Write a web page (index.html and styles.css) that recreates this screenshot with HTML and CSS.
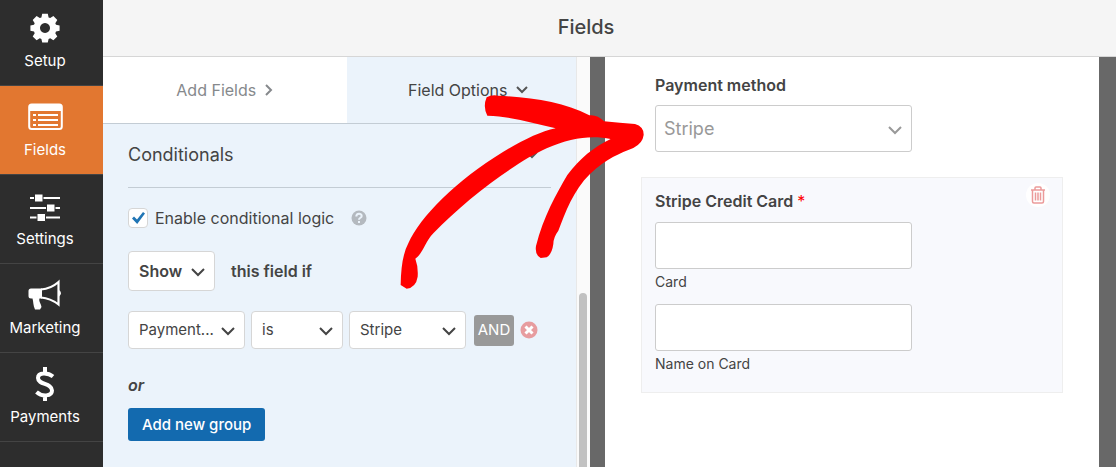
FILE: index.html
```html
<!DOCTYPE html>
<html lang="en">
	<head>
		<meta charset="utf-8">
		<title>Fields</title>
		<link rel="stylesheet" href="styles.css">
	</head>
	<body>

	<nav class="sidebar">
		<a href="#" class="item">
			<svg width="30" height="30" viewBox="0 0 30 30">
				<path fill="#fff" fill-rule="evenodd" d="M12.2 0.8h5.6l0.8 3.6 1.6 0.7 3.2-2 3.9 3.9-2 3.2 0.7 1.6 3.6 0.6v5.4l-3.6 0.8-0.7 1.6 2 3.2-3.9 3.9-3.2-2-1.6 0.7-0.8 3.6h-5.6l-0.8-3.6-1.6-0.7-3.2 2-3.9-3.9 2-3.2-0.7-1.6-3.6-0.8v-5.4l3.6-0.6 0.7-1.6-2-3.2 3.9-3.9 3.2 2 1.6-0.7zM15 10a5 5 0 1 0 0.01 0z"/>
			</svg>
			<span>Setup</span>
		</a>
		<a href="#" class="item active">
			<svg width="35" height="30" viewBox="0 0 35 30">
				<rect x="1.2" y="2.5" width="32.6" height="24.5" rx="2.5" fill="none" stroke="#fff" stroke-width="2"/>
				<path fill="#fff" d="M1 3h33v6H1z"/>
				<path stroke="#fff" stroke-width="2" d="M5 13h3M10 13h20M5 18h3M10 18h20M5 23h3M10 23h20"/>
			</svg>
			<span>Fields</span>
		</a>
		<a href="#" class="item">
			<svg width="30" height="36" viewBox="0 0 30 36">
				<path stroke="#fff" stroke-width="2" d="M0 10h30M0 20h30M0 29.500h30"/>
				<path fill="#fff" stroke="#2d2d2d" d="M4.500 6h8.500v8h-8.500zM16.500 16h8.500v8h-8.500zM7 25.500h8.500v8H7z"/>
			</svg>
			<span>Settings</span>
		</a>
		<a href="#" class="item">
			<svg width="36" height="30" viewBox="0 0 36 30">
				<path fill="#fff" d="M4 8.500h11v10h-2.500c-1 3 1.500 5 2 8.500l-1.500 2.500H8C6 25 6.500 22 5.500 18.500H4q-2.500 0-2.500-2.500v-5q0-2.500 2.500-2.500z"/>
				<path fill="none" stroke="#fff" stroke-width="2.200" d="M14 9.500C21 9 27 6 31.500 2v22.500C27 21 21 18 14 17.500"/>
				<path fill="#fff" d="M32 10q4 3.200 0 6.500z"/>
			</svg>
			<span>Marketing</span>
		</a>
		<a href="#" class="item">
			<svg width="24" height="36" viewBox="0 0 24 36">
				<path fill="none" stroke="#fff" stroke-width="4" d="M12 1v6M12 29v6M20 10.500C15 6.500 5 6 5 12c0 7 14 5 14 12.500 0 6-10 6.500-15.500 1.500"/>
			</svg>
			<span>Payments</span>
		</a>
	</nav>

	<div class="main">
		<header class="header"><h1>Fields</h1></header>
		<div class="content">
			<section class="panel">
				<div class="tabs">
					<a href="#" class="tab">Add Fields
						<svg width="8" height="12" viewBox="0 0 8 12"><path d="M1 1l5 5-5 5"/></svg>
					</a>
					<a href="#" class="tab active">Field Options
						<svg width="12" height="8" viewBox="0 0 12 8"><path d="M1 1l5 5 5-5"/></svg>
					</a>
				</div>

				<div class="options">
					<h2>Conditionals
						<svg width="12" height="8" viewBox="0 0 12 8"><path d="M1 1l5 5 5-5"/></svg>
					</h2>
					<div class="enable">
						<label for="conditional">
							<span class="tick">
								<input type="checkbox" id="conditional" checked>
								<svg width="13" height="12" viewBox="0 0 13 12"><path d="M0 6.500L2 4.500 5 7.500 11 0l2 1.500L5.200 12z"/></svg>
							</span>
							Enable conditional logic
						</label>
						<svg class="help" width="16" height="16" viewBox="0 0 16 16">
							<circle cx="8" cy="8" r="7.500" fill="#b4b9bf"/>
							<path fill="none" stroke="#ebf3fb" stroke-width="2" d="M5.300 6.500C5.300 3 10.700 3 10.700 6 10.700 8 8 7.500 8 9.800M8 11v2"/>
						</svg>
					</div>
					<div class="row show">
						<span class="select">
							<select aria-label="Action"><option>Show</option></select>
							<svg width="14" height="9" viewBox="0 0 14 9"><path d="M1 1l6 6 6-6"/></svg>
						</span>
						<span>this field if</span>
					</div>
					<div class="row rule">
						<span class="select wide">
							<select aria-label="Field"><option>Payment...</option></select>
							<svg width="14" height="9" viewBox="0 0 14 9"><path d="M1 1l6 6 6-6"/></svg>
						</span>
						<span class="select">
							<select aria-label="Operator"><option>is</option></select>
							<svg width="14" height="9" viewBox="0 0 14 9"><path d="M1 1l6 6 6-6"/></svg>
						</span>
						<span class="select wide">
							<select aria-label="Value"><option>Stripe</option></select>
							<svg width="14" height="9" viewBox="0 0 14 9"><path d="M1 1l6 6 6-6"/></svg>
						</span>
						<button class="and">AND</button>
						<button class="remove" aria-label="Remove rule">
							<svg width="18" height="18" viewBox="0 0 18 18">
								<circle cx="9" cy="9" r="8.500" fill="#e79c9f"/>
								<path stroke="#fff" stroke-width="3" d="M5.500 5.500l7 7M12.500 5.500l-7 7"/>
							</svg>
						</button>
					</div>
					<p class="or">or</p>
					<button class="add">Add new group</button>
				</div>

				<div class="scrollbar"><div class="thumb"></div></div>
				<svg class="arrow" width="270" height="250" viewBox="0 0 810 750">
					<path fill="#f00" d="M290 172Q305 163 325 167C430 173 520 185 598 226Q622 223 642 244Q690 249 735 252Q762 260 761 285Q758 310 730 324C690 340 650 355 600 402C550 450 525 520 505 572Q490 592 490 612Q486 642 470 652L452 654Q434 645 438 618C460 530 500 460 532 405C570 355 610 322 662 297C600 285 540 295 470 325C380 365 230 475 130 580C105 605 100 640 76 656Q85 680 83 710Q78 742 50 746L32 735Q33 650 55 610C90 530 200 420 340 335C400 300 450 275 497 265C430 250 370 230 292 227Q278 200 290 172Z"/>
				</svg>
			</section>

			<main class="preview">
				<form class="form">
					<div class="field">
						<label class="title" for="method">Payment method</label>
						<span class="select">
							<select id="method"><option>Stripe</option></select>
							<svg width="14" height="9" viewBox="0 0 14 9"><path d="M1 1l6 6 6-6"/></svg>
						</span>
					</div>
					<div class="field card">
						<button type="button" class="trash" aria-label="Delete field">
							<svg width="16" height="18" viewBox="0 0 16 18">
								<path fill="none" stroke="#eb9a9a" stroke-width="1.500" d="M1 4h14M5 4V2q0-1 1-1h4q1 0 1 1v2M2.500 4v11.500q0 1.500 1.500 1.500h8q1.500 0 1.500-1.500V4M5.500 6.500v8M8 6.500v8M10.500 6.500v8"/>
							</svg>
						</button>
						<div class="title">Stripe Credit Card<span class="required">*</span></div>
						<input type="text" id="card">
						<label for="card">Card</label>
						<input type="text" id="name">
						<label for="name">Name on Card</label>
					</div>
				</form>
			</main>
		</div>
	</div>

	</body>
</html>
```

FILE: styles.css
```css
*{
	box-sizing: border-box;
}
body{
	margin: 0;
	display: flex;
	min-height: 100vh;
	font-family: Inter, "Liberation Sans", sans-serif;
	font-size: 16px;
	line-height: 20px;
	color: #444;
}
a{
	text-decoration: none;
}
button, select, input{
	font: inherit;
	color: inherit;
	margin: 0;
}
button{
	border: 0;
	cursor: pointer;
}

.sidebar{
	width: 103px;
	flex: none;
	margin-top: -3px;
	background: #2d2d2d;
}
.sidebar .item{
	display: flex;
	flex-direction: column;
	align-items: center;
	height: 89px;
	padding-right: 13px;
	border-bottom: 1px solid #444;
	font-size: 15px;
	color: #fff;
}
.sidebar .item svg{
	height: 36px;
	margin: 13px 0 5px;
}
.sidebar .active{
	background: #e27730;
}

.main{
	flex: 1;
	display: flex;
	flex-direction: column;
	min-width: 0;
}
.header{
	height: 57px;
	padding-right: 47px;
	background: #f5f5f5;
	border-bottom: 1px solid #d6d6d6;
}
.header h1{
	margin: 0;
	font-size: 20px;
	font-weight: 500;
	line-height: 54px;
	text-align: center;
}
.content{
	flex: 1;
	display: flex;
}

.panel{
	position: relative;
	width: 487px;
	flex: none;
	background: #ebf3fb;
}
.tabs{
	display: flex;
	height: 67px;
	border-bottom: 1px solid #c3ccd4;
}
.tab{
	flex: 1;
	display: flex;
	align-items: center;
	justify-content: center;
	gap: 9px;
	background: #fff;
	color: #86898c;
}
.tab.active{
	background: #ebf3fb;
	color: #444;
}
.tab svg, h2 svg{
	fill: none;
	stroke: #86898c;
	stroke-width: 2;
}
.tab.active svg, h2 svg{
	stroke: #555;
}
.options{
	padding: 0 39px 0 25px;
}
.options h2{
	display: flex;
	align-items: center;
	justify-content: space-between;
	height: 64px;
	margin: 0 0 20px;
	padding: 0 13px 2px 0;
	border-bottom: 1px solid #c3ccd4;
	font-size: 18px;
	font-weight: 400;
}
.enable, .enable label{
	display: flex;
	align-items: center;
}
.enable{
	gap: 17px;
	margin-bottom: 23px;
}
.enable label{
	gap: 7px;
}
.tick{
	position: relative;
	width: 20px;
	height: 20px;
}
.tick input{
	display: block;
	appearance: none;
	width: 20px;
	height: 20px;
	background: #fff;
	border: 1px solid #d6d6d6;
	border-radius: 4px;
}
.tick svg{
	position: absolute;
	left: 4px;
	top: 4px;
	fill: #2075b5;
	pointer-events: none;
}

.row{
	display: flex;
	align-items: center;
	gap: 6px;
	margin-bottom: 20px;
}
.show{
	gap: 16px;
	font-weight: 600;
}
.select{
	position: relative;
	display: block;
}
.select select{
	display: block;
	appearance: none;
	width: 100%;
	height: 38px;
	padding: 0 10px;
	background: #fff;
	border: 1px solid #d6d6d6;
	border-radius: 4px;
}
.select svg{
	position: absolute;
	right: 10px;
	top: 50%;
	margin-top: -3px;
	fill: none;
	stroke: #444;
	stroke-width: 2;
	pointer-events: none;
}
.show .select{
	width: 87px;
}
.show .select select{
	height: 40px;
}
.rule{
	font-size: 15px;
}
.rule .select{
	width: 92px;
}
.rule .wide{
	width: 117px;
}
.and{
	width: 40px;
	height: 31px;
	margin-left: 2px;
	padding: 0;
	background: #999;
	border-radius: 3px;
	color: #fff;
}
.remove{
	padding: 0;
	background: none;
}
.remove svg{
	display: block;
}
.or{
	margin: 0 0 13px;
	padding-top: 6px;
	font-style: italic;
	font-weight: 600;
}
.add{
	height: 33px;
	padding: 0 14px;
	background: #136aaf;
	border-radius: 3px;
	font-size: 15px;
	font-weight: 500;
	color: #fff;
}
.scrollbar{
	position: absolute;
	top: 0;
	right: 0;
	bottom: 0;
	width: 14px;
	padding: 236px 3px 0 2px;
	background: #fafafa;
	border-left: 1px solid #e8e8e8;
}
.thumb{
	height: 100%;
	background: #c1c1c1;
	border-radius: 4px 4px 0 0;
}
.arrow{
	position: absolute;
	left: 287px;
	top: -17px;
	z-index: 2;
	pointer-events: none;
}

.preview{
	flex: 1;
	padding: 0 17px 0 15px;
	background: #686868;
}
.form{
	height: 100%;
	padding: 4px 36px 0;
	background: #fff;
}
.field{
	position: relative;
	padding: 14px;
}
.field .title{
	display: block;
	margin-bottom: 10px;
	font-size: 16px;
	font-weight: 600;
}
.field .select, .field input{
	display: block;
	width: 100%;
	max-width: 257px;
}
.field .select select, .field input{
	height: 47px;
	padding: 0 8px;
	background: #fff;
	border: 1px solid #ccc;
	border-radius: 3px;
}
.field select{
	font-size: 18px;
	color: #999;
}
.field .select svg{
	stroke: #999;
}
.field label{
	font-size: 14px;
}
.card{
	margin-top: 11px;
	padding: 13px 13px 18px;
	background: #f8f9fd;
	border: 1px solid #eee;
}
.card .title{
	margin-bottom: 11px;
}
.card label{
	display: block;
	margin: 3px 0 12px;
}
.card label:last-child{
	margin-bottom: 0;
}
.required{
	margin-left: 4px;
	color: #f00;
	font-weight: 400;
}
.trash{
	position: absolute;
	top: 5px;
	right: 12px;
	display: flex;
	align-items: center;
	justify-content: center;
	width: 24px;
	height: 24px;
	padding: 0;
	background: #fff;
	border-radius: 50%;
}
```
